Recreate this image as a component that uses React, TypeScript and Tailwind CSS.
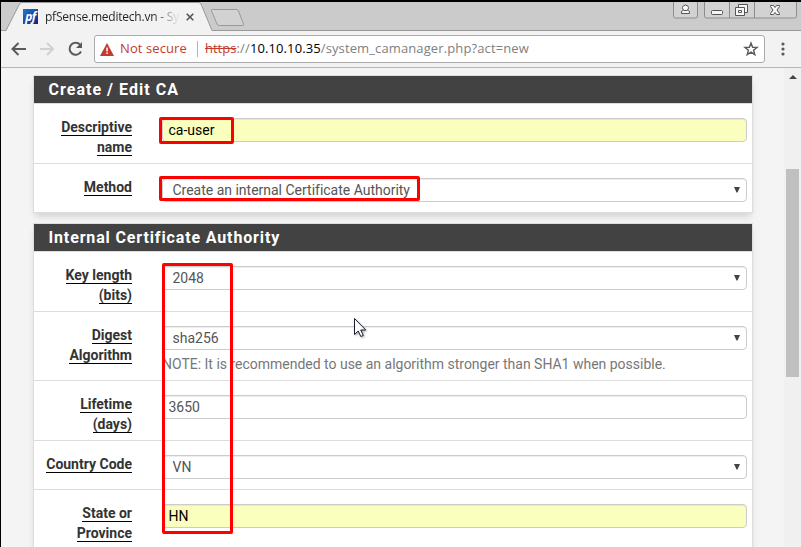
import type { ReactNode } from "react";

function Panel({
  title,
  tracking,
  children,
  className = "",
}: {
  title: string;
  tracking: string;
  children: ReactNode;
  className?: string;
}) {
  return (
    <section className={`w-[720px] border border-[#ddd] bg-white shadow-[0_5px_7px_-2px_rgba(0,0,0,0.15)] ${className}`}>
      <h2 className={`flex h-7 items-center border-b border-[#ddd] bg-[#424242] pl-[14.5px] text-[16px] leading-[27px] font-bold text-white ${tracking}`}>
        {title}
      </h2>
      {children}
    </section>
  );
}

function Row({ label, h, last, children }: { label: string[]; h: string; last?: boolean; children: ReactNode }) {
  return (
    <div className={`flex ${h} ${last ? "" : "border-b border-[#ddd]"}`}>
      <div className="mr-[30px] flex w-[98px] shrink-0 flex-col items-end pt-[15px] text-[14px] font-bold text-[#333]">
        {label.map((l) => (
          <div key={l} className="mb-[3px] h-[17px] whitespace-nowrap border-b border-black leading-[17px]">
            {l}
          </div>
        ))}
      </div>
      <div className="w-[585px] pt-[14px]">{children}</div>
    </div>
  );
}

function Field({ value, yellow }: { value: string; yellow?: boolean }) {
  return (
    <div
      className={`h-6 rounded-[4px] border border-[#ccc] pl-[5.5px] leading-[23px] shadow-[inset_0_1px_1px_rgba(0,0,0,0.075)] ${
        yellow ? "bg-[#faffbd] text-black" : "bg-white text-[#555]"
      }`}
    >
      {value}
    </div>
  );
}

function SelectBox({ value }: { value: string }) {
  return (
    <div className="flex h-6 items-center justify-between rounded-[4px] border border-[#ccc] bg-white pr-[6px] pl-[9.5px] leading-[23px] text-[#555] shadow-[inset_0_1px_1px_rgba(0,0,0,0.075)]">
      <span className="whitespace-pre tracking-[-0.01px]">{value}</span>
      <svg width="6" height="6" viewBox="0 0 6 6" className="mb-px">
        <path d="M0 0h6L3.500 5.500h-1z" fill="#444" />
      </svg>
    </div>
  );
}

function WindowButtons() {
  return (
    <svg width="128" height="20" viewBox="0 0 128 20" className="ml-auto" fill="none">
      <g stroke="#8d8d8d">
        <path d="M.5 0v14q0 2 2 2h20q2 0 2-2V0" fill="#d2d2d2" />
        <path d="M31.500 0v14q0 2 2 2h88q2 0 2-2V0M56.500 0v16M81.500 0v16" fill="#d2d2d2" />
      </g>
      <g stroke="#555" fill="#f6f6f6">
        <path d="M8.500 11.500v-2l2-1.500q-1-1-1-2.500 0-2 3-2.500 3 .5 3 2.500 0 1.500-1 2.500l2 1.500v2zM10.500 8.500h4" />
        <rect x="38.500" y="8.500" width="11" height="4" rx="1" />
        <path d="M65.500 2.500h9v8h-9z" />
        <path d="M62.500 5.500h9v8h-9z" />
        <path d="M65.500 8.500h3v2h-3z" />
        <path d="M97.500 3.500h3l1.500 2 1.500-2h3v1l-2.500 3.500 2.500 3.500v1h-3l-1.500-2-1.500 2h-3v-1l2.500-3.500-2.500-3.500z" />
      </g>
    </svg>
  );
}

export default function App() {
  return (
    <div className="relative flex h-[547px] w-[801px] flex-col overflow-hidden border-t-2 border-l border-black bg-[#f4f4f4] font-['Roboto',sans-serif] text-[14px]">
      <header className="relative h-[29px] shrink-0 border-b border-[#999] bg-[#cbcbcb]">
        <svg width="250" height="29" viewBox="0 0 250 29" className="absolute top-0 left-0">
          <path d="M5 29 L18.500 2 Q19.500 .5 21 .5 H197 Q199 .5 200 2 L211 28.500 V29 Z" fill="#f2f2f2" />
          <path d="M0 28.500 H5 L18.500 2 Q19.500 .5 21 .5 H197 Q199 .5 200 2 L211 28.500 H216" fill="none" stroke="#999" />
          <path d="M211 7.500h24q2 0 2.500 1.500l5 13q.5 1.500-1 1.500h-23q-2 0-2.500-1.500l-5.500-13q-.5-1.500.5-1.500z" fill="#d2d2d2" stroke="#999" />
        </svg>
        <div className="relative flex h-[29px] items-center">
          <div className="ml-[22px] flex size-[15px] items-center justify-center bg-gradient-to-br from-[#2478cc] to-[#171a82] font-['Open_Sans',sans-serif] text-[12px] leading-[13px] font-bold tracking-[-0.5px] text-white italic">
            pf
          </div>
          <div className="ml-[7px] w-[134px] bg-gradient-to-r from-[#222] from-80% to-[#ddd] to-98% bg-clip-text font-['Open_Sans',sans-serif] text-[12px] leading-[18px] tracking-[-0.22px] whitespace-nowrap text-transparent">
            pfSense.meditech.vn - Sy
          </div>
          <svg width="8" height="8" viewBox="0 0 8 8" className="ml-[7px]">
            <path d="M.7 .7l6.600 6.600M7.300 .7L.7 7.300" stroke="#555" strokeWidth="1.600" />
          </svg>
          <div className="ml-auto flex self-start">
            <WindowButtons />
          </div>
        </div>
      </header>

      <nav className="flex h-[37px] shrink-0 items-center border-b border-[#b5b5b5] bg-[#f2f2f2] font-['Open_Sans',sans-serif] text-[13px]">
        <svg width="84" height="28" viewBox="0 0 84 28" className="ml-[9px] shrink-0" fill="none" strokeWidth="2">
          <path d="M16 14H3M8.500 8L2.500 14l6 6" stroke="#5a5a5a" />
          <path d="M30 14h13M37 8l6 6-6 6" stroke="#d0d0d0" />
          <path d="M70.500 10.300A6 6 0 1 0 71 16.500" stroke="#5a5a5a" />
          <path d="M72 7v6h-6z" fill="#5a5a5a" />
        </svg>
        <div className="flex h-7 w-[671px] shrink-0 items-center rounded-[3px] border border-[#aaa] bg-white">
          <svg width="14" height="13" viewBox="0 0 14 13" className="ml-[5px] shrink-0">
            <path d="M7 0l7 13H0z" fill="#c33b2c" />
            <path d="M6.300 4.500h1.500v4H6.300zM6.300 9.500h1.500V11H6.300z" fill="#fff" />
          </svg>
          <span className="ml-[6px] w-[67px] whitespace-nowrap tracking-[0.1px] text-[#c33b2c]">Not secure</span>
          <span className="mr-[7px] ml-[10px] h-4 w-px shrink-0 bg-[#b5b5b5]" />
          <span className="whitespace-nowrap text-[#808080]">
            <span className="text-[#c33b2c] line-through">https</span>
            <span className="tracking-[0.2px]">://</span>
            <span className="tracking-[0.1px] text-black">10.10.10.35</span>
            <span className="tracking-[0.12px]">/system_camanager.php?act=new</span>
          </span>
          <svg width="16" height="16" viewBox="0 0 16 16" className="mr-[5px] ml-auto">
            <path d="M8 2l1.600 4.200 4.500.2-3.500 2.800 1.200 4.400L8 11.100l-3.800 2.500 1.200-4.400L1.900 6.400l4.500-.2z" fill="none" stroke="#5a5a5a" strokeWidth="1.400" />
          </svg>
        </div>
        <svg width="4" height="14" viewBox="0 0 4 14" className="ml-[16px]" fill="#5a5a5a">
          <circle cx="2" cy="2" r="1.600" />
          <circle cx="2" cy="7" r="1.600" />
          <circle cx="2" cy="12" r="1.600" />
        </svg>
      </nav>

      <div className="flex min-h-0 flex-1 justify-between">
        <main className="ml-8 pt-[7px]">
          <Panel title="Create / Edit CA" tracking="tracking-[1.03px]">
            <Row label={["Descriptive", "name"]} h="h-[60px]">
              <Field value="ca-user" yellow />
            </Row>
            <Row label={["Method"]} h="h-12" last>
              <SelectBox value="Create an internal Certificate Authority" />
            </Row>
          </Panel>
          <Panel title="Internal Certificate Authority" tracking="tracking-[0.86px]" className="mt-[10px]">
            <Row label={["Key length", "(bits)"]} h="h-[60px]">
              <SelectBox value="2048" />
            </Row>
            <Row label={["Digest", "Algorithm"]} h="h-[69px]">
              <SelectBox value="sha256" />
              <p className="mt-[4px] leading-5 tracking-[-0.01px] text-[#777]">NOTE: It is recommended to use an algorithm stronger than SHA1 when possible.</p>
            </Row>
            <Row label={["Lifetime", "(days)"]} h="h-[60px]">
              <Field value="3650" />
            </Row>
            <Row label={["Country Code"]} h="h-[49px]">
              <SelectBox value="VN" />
            </Row>
            <Row label={["State or", "Province"]} h="h-[70px]">
              <Field value="HN" yellow />
            </Row>
          </Panel>
        </main>
        <aside className="flex w-[17px] flex-col items-center bg-[#f0f0f0] pt-[7px]">
          <svg width="8" height="4" viewBox="0 0 8 4">
            <path d="M4 0l4 4H0z" fill="#444" />
          </svg>
          <div className="mt-[90px] h-[208px] w-[13px] bg-[#c0c0c0]" />
        </aside>
      </div>

      <div className="absolute top-[115px] left-[158px] h-[27px] w-[75px] rounded-[2px] border-3 border-[#f00]" />
      <div className="absolute top-[174px] left-[158px] h-[25px] w-[261px] rounded-[2px] border-3 border-[#f00]" />
      <div className="absolute top-[261px] left-[161px] h-[271px] w-[71px] rounded-[2px] border-3 border-[#f00]" />
      <svg width="16" height="22" viewBox="0 0 16 22" className="absolute top-[316px] left-[353px] drop-shadow-[1px_1px_1px_rgba(0,0,0,0.35)]">
        <path d="M.5 .5v16l3.700-3.500 2.600 5.500 2.500-1.100-2.600-5.400h5z" fill="#fff" stroke="#1b1b35" />
      </svg>
    </div>
  );
}
